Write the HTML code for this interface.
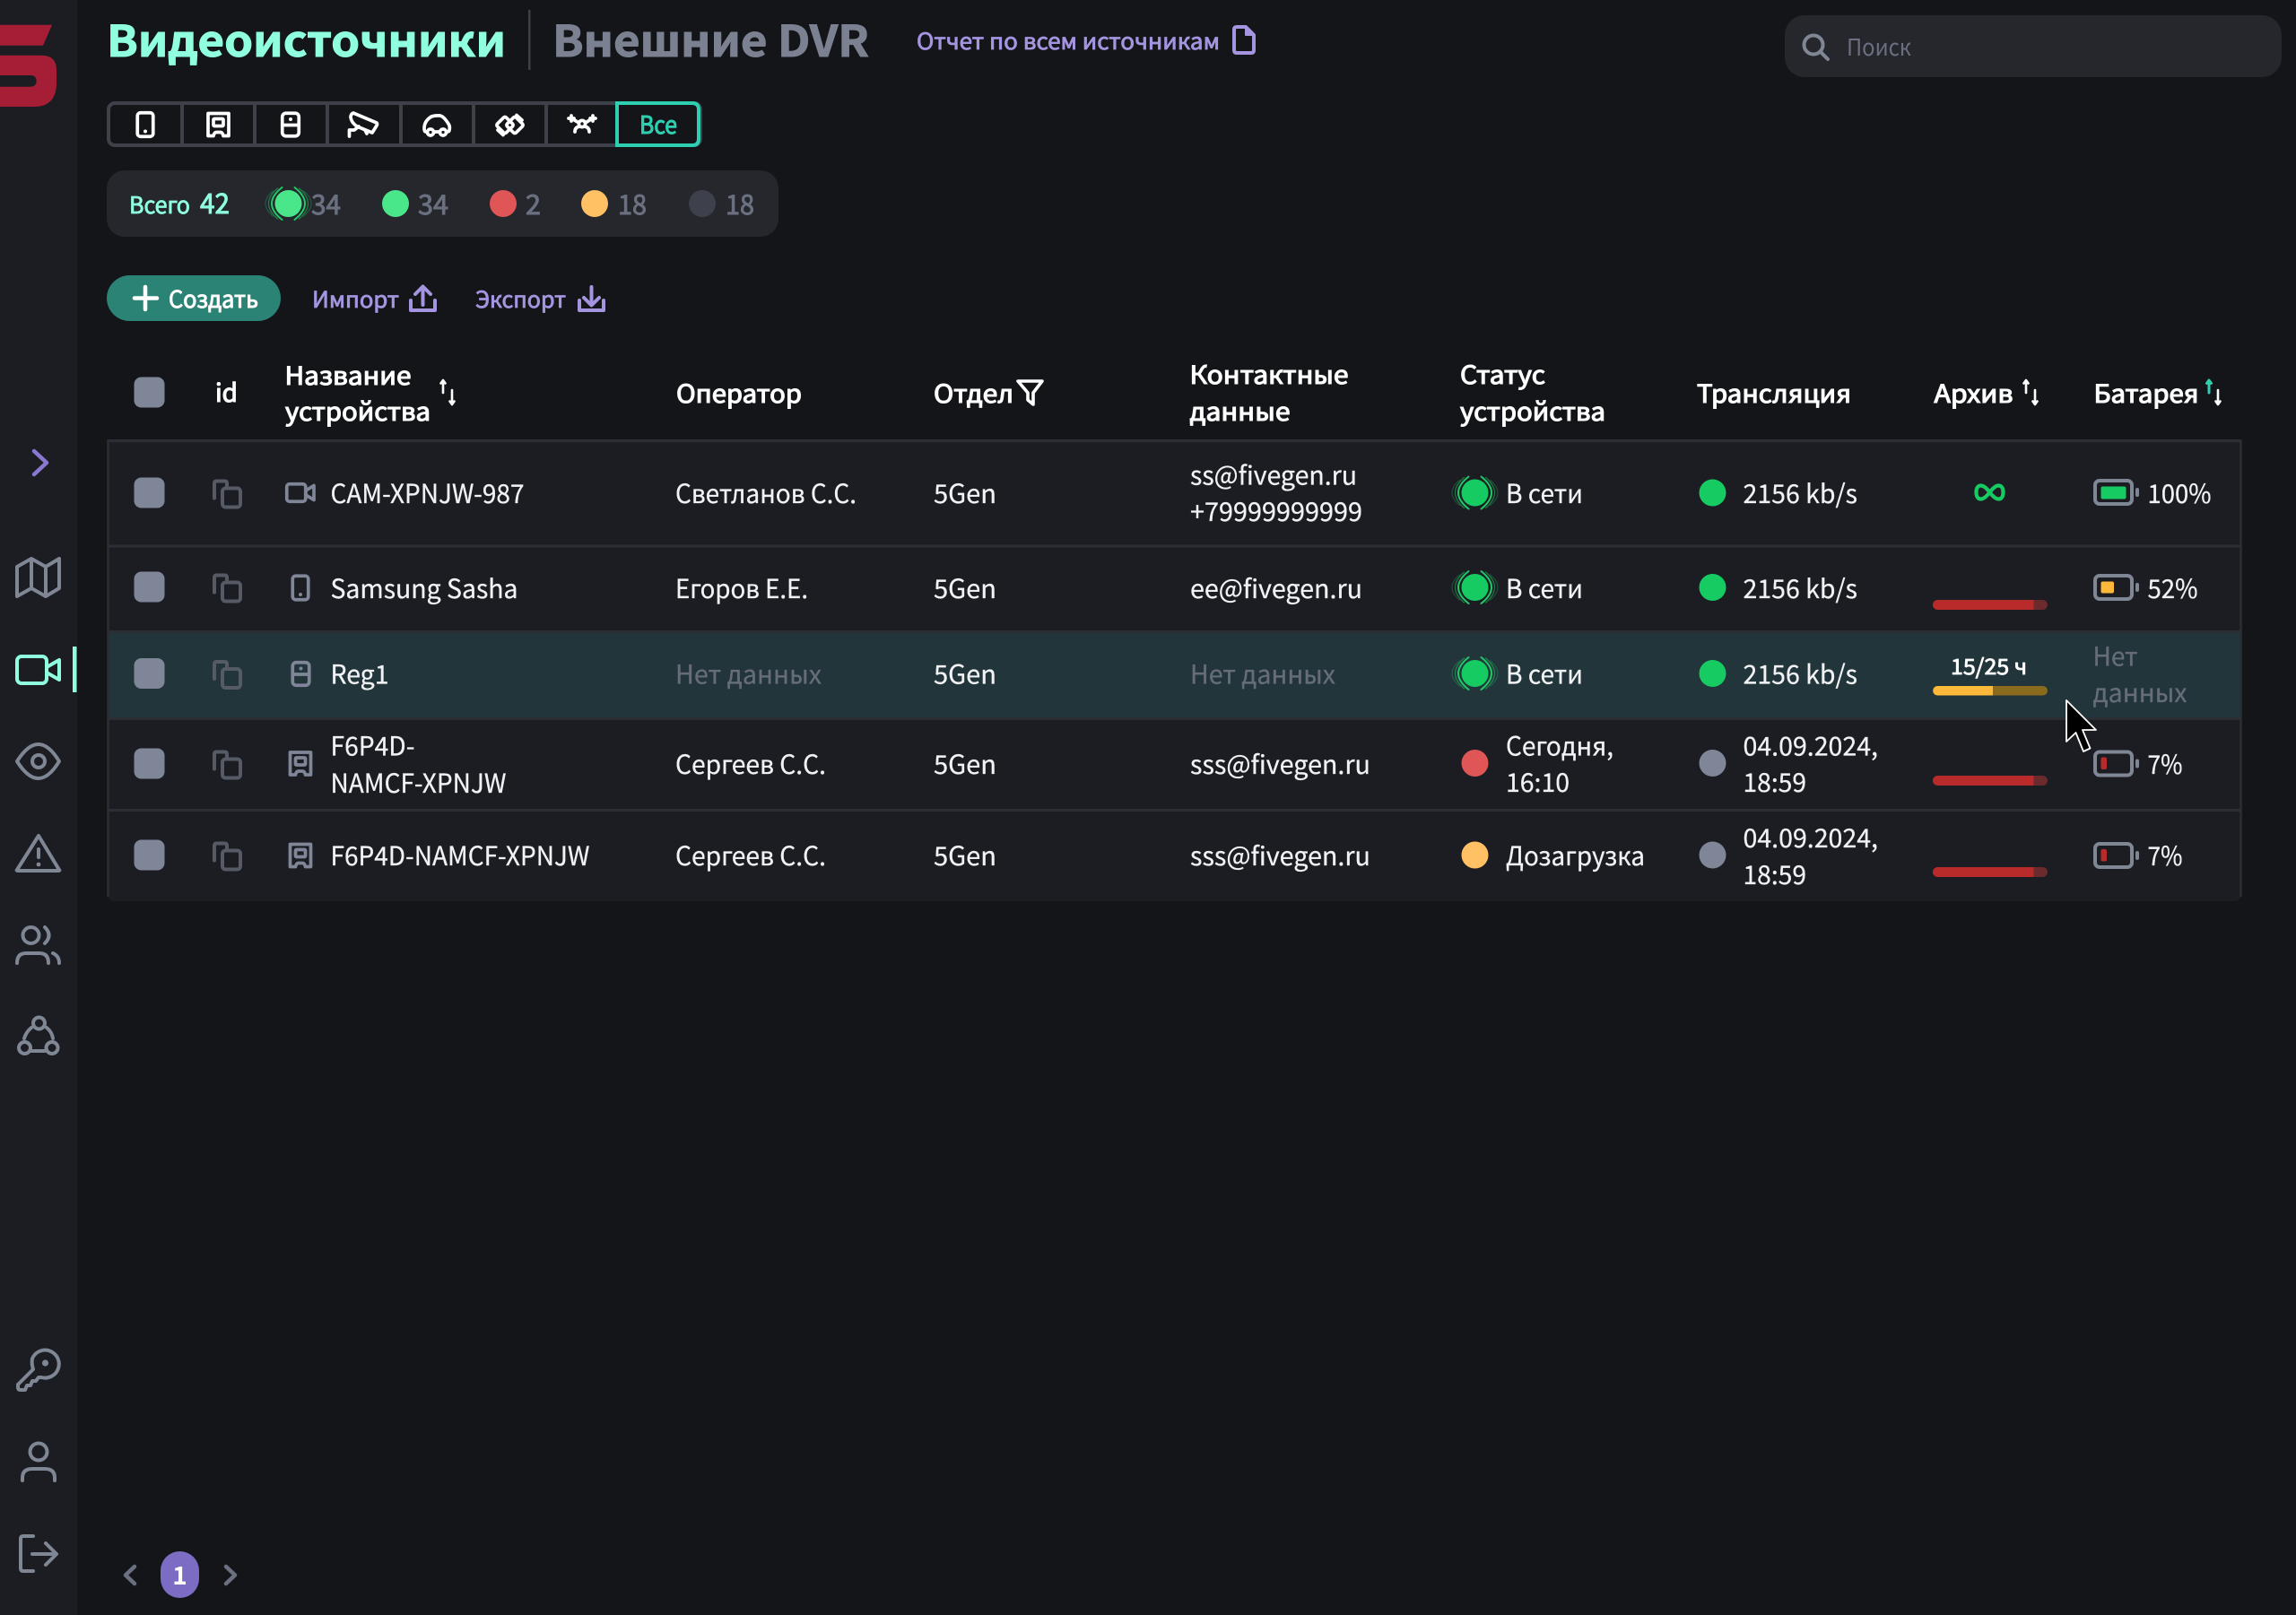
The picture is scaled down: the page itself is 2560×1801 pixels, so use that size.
<!DOCTYPE html>
<html lang="ru"><head><meta charset="utf-8"><title>Видеоисточники</title>
<style>
html,body{margin:0;padding:0;background:#131519;width:2560px;height:1801px;overflow:hidden}
svg{display:block}
text{font-family:"Noto Sans CJK JP","Liberation Sans",sans-serif}
.b{font-size:29px;fill:#f1f2f4;stroke:#f1f2f4;stroke-width:.25px}
.m{font-size:29px;fill:#666c7a;stroke:#666c7a;stroke-width:.25px}
.h{font-size:28px;fill:#fff;stroke:#fff;stroke-width:1.1px}
.p{font-size:25px;fill:#a595e0;stroke:#a595e0;stroke-width:.8px}
.c{font-size:30px;fill:#6b7080;stroke:#6b7080;stroke-width:.9px}
.i{fill:none;stroke:#7f8694;stroke-width:4;stroke-linecap:round;stroke-linejoin:round}
.s{fill:none;stroke:currentColor;stroke-width:3.7;stroke-linecap:round;stroke-linejoin:round}
</style></head><body>
<svg width="2560" height="1801" viewBox="0 0 2560 1801" xmlns="http://www.w3.org/2000/svg">
<defs>
<symbol id="phone" overflow="visible"><rect class="s" x="1.75" y="1.75" width="17.5" height="26.5" rx="3.5"/><circle cx="10.5" cy="22.5" r="2" fill="currentColor"/></symbol>
<symbol id="dvr" overflow="visible"><path class="s" d="M2 2H25V27H19Q18 23 16 23H11Q9 23 8 27H2Z"/><rect class="s" x="8" y="8" width="11" height="8" rx="1"/></symbol>
<symbol id="reg" overflow="visible"><rect class="s" x="1.75" y="1.75" width="18.5" height="25.5" rx="4"/><path class="s" d="M1.75 15H20.25"/><circle cx="11" cy="8.5" r="2" fill="currentColor"/></symbol>
<symbol id="cam" overflow="visible"><rect class="s" x="1.75" y="1.75" width="21" height="19.5" rx="3"/><path class="s" d="M23 9L32 3.5V19.5L23 14Z"/></symbol>
<symbol id="copy" overflow="visible"><path fill="none" stroke="#555a65" stroke-width="4" stroke-linecap="round" d="M2 21V4.500Q2 2 4.500 2H13.500Q16 2 16 4.500V7"/><rect fill="none" stroke="#555a65" stroke-width="4" x="11" y="10" width="20" height="21" rx="3.500"/></symbol>
<symbol id="sort" overflow="visible"><g fill="none" stroke="#fff" stroke-width="2.6" stroke-linecap="round" stroke-linejoin="round"><path d="M4 1V15M1.5 4.5L4 1L6.5 4.5"/><path d="M14 12V28M11.5 24.5L14 28L16.5 24.5"/></g></symbol>
<symbol id="live" overflow="visible"><g fill="none" stroke="#22c868" stroke-linecap="round"><path stroke-width="2" d="M-7 -18Q-30 0 -7 18M7 -18Q30 0 7 18"/><path stroke-width="1.2" opacity=".55" d="M-12 -17Q-32 0 -12 17M12 -17Q32 0 12 17"/><path stroke-width="1.2" opacity=".3" d="M-17 -14Q-34 0 -17 14M17 -14Q34 0 17 14"/></g></symbol>
<symbol id="batt" overflow="visible"><rect x="2" y="2" width="41" height="26" rx="5" fill="none" stroke="#7f8694" stroke-width="4"/><rect x="47" y="10" width="4" height="10" rx="2" fill="#7f8694"/></symbol>
</defs>

<rect width="2560" height="1801" fill="#131519"/>
<!-- sidebar -->
<rect width="86" height="1801" fill="#1b1d23"/>
<g fill="#a51e36">
<path d="M0 27.700H58L48 50.700H0Z"/>
<path fill-rule="evenodd" d="M0 61.700H46Q63 61.700 63 78V92Q63 119 38 119H0ZM0 84V96.700H34Q40.600 96.700 40.600 90.300Q40.600 84 34 84Z"/>
</g>
<path fill="none" stroke="#8a78d0" stroke-width="4.5" stroke-linecap="round" stroke-linejoin="round" d="M38 503L52 516L38 529"/>
<path class="i" d="M19 632L35 623L51 632L66 623V656L51 665L35 656L19 665ZM35 623V656M51 632V665"/>
<g class="i" style="stroke:#8fffe0"><rect x="19" y="732" width="33" height="30" rx="5"/><path d="M52 744L66 736V758L52 750Z"/></g>
<rect x="81" y="721" width="4.5" height="51" fill="#8fffe0"/>
<path class="i" d="M19 849Q43 811 66 849Q43 887 19 849Z"/><circle class="i" cx="43" cy="849" r="7"/>
<path class="i" d="M43 932L66 970Q67 971 65 971H20Q18 971 19 970Z"/><path class="i" d="M43 947V956"/><circle cx="43" cy="964" r="2.4" fill="#7f8694"/>
<circle class="i" cx="34.5" cy="1043" r="9"/><path class="i" d="M19 1074Q19 1063 29 1063H44Q54 1063 54 1074M50 1034Q59 1043 50 1052M59 1063Q66 1066 66 1074"/>
<circle class="i" cx="43.5" cy="1141" r="6.5"/><circle class="i" cx="27.5" cy="1168.5" r="6.5"/><circle class="i" cx="58" cy="1168.5" r="6.5"/><path class="i" d="M35 1146Q29 1151 27 1158M52 1146Q58 1151 59 1158M35 1172H50"/>
<path class="i" d="M36 1515A15.5 15.5 0 1 1 46 1536H43L40 1540H36L34 1545H30L28 1550H23Q20 1550 20 1547V1544L37 1527Q35 1521 36 1515Z"/><circle cx="50.5" cy="1520" r="3.6" fill="#7f8694"/>
<circle class="i" cx="43" cy="1619" r="9.5"/><path class="i" d="M25 1651V1648Q25 1638 36 1638H50Q61 1638 61 1648V1651"/>
<path class="i" d="M37 1713H26Q23 1713 23 1716V1749Q23 1752 26 1752H37M36 1733H62M51 1721L63 1733L51 1745"/>

<!-- header -->
<text x="119" y="63" font-size="48" font-weight="700" fill="#8fffe0" stroke="#8fffe0" stroke-width="1" textLength="445" lengthAdjust="spacingAndGlyphs">Видеоисточники</text>
<rect x="589" y="11" width="2.5" height="67" fill="#3e4049"/>
<text x="616" y="63" font-size="48" font-weight="700" fill="#7b8190" stroke="#7b8190" stroke-width="1" textLength="353" lengthAdjust="spacingAndGlyphs">Внешние DVR</text>
<text class="p" x="1022" y="55" textLength="338" lengthAdjust="spacingAndGlyphs">Отчет по всем источникам</text>
<path fill="none" stroke="#a595e0" stroke-width="4" stroke-linejoin="round" d="M1376 33Q1376 30 1379 30H1389L1398 39V56Q1398 59 1395 59H1379Q1376 59 1376 56Z"/><path fill="#a595e0" stroke="#a595e0" stroke-width="2" stroke-linejoin="round" d="M1389 30V39H1398Z"/>
<rect x="1990" y="17" width="554" height="69" rx="22" fill="#25272d"/>
<circle class="i" cx="2022" cy="50" r="10.5"/><path class="i" d="M2030 58L2038 66"/>
<text x="2059" y="62" font-size="26" fill="#6b7080" textLength="72" lengthAdjust="spacingAndGlyphs">Поиск</text>

<!-- device tabs -->
<rect x="121" y="115" width="660" height="47" rx="7" fill="none" stroke="#3e4149" stroke-width="4"/>
<g fill="#3e4149"><rect x="201" y="113" width="4" height="51"/><rect x="282" y="113" width="4" height="51"/><rect x="363" y="113" width="4" height="51"/><rect x="445" y="113" width="4" height="51"/><rect x="526" y="113" width="4" height="51"/><rect x="607" y="113" width="4" height="51"/></g>
<path d="M688 115H772Q779 115 779 122V155Q779 162 772 162H688Z" fill="#131519" stroke="#2ecfb0" stroke-width="4"/>
<g color="#fff">
<use href="#phone" x="151.5" y="124"/>
<use href="#dvr" x="230" y="124.5"/>
<use href="#reg" x="313" y="124.5"/>
<g class="s" transform="translate(388 123)"><path d="M6 3L32 14Q33 15 32 17L27 25L10 18Q4 14 3 8Q3 4 6 3Z"/><path d="M1.5 29V22H7L12 18M19 22L21 26"/></g>
<g class="s" transform="translate(471 127)"><path d="M5.5 20H4Q2 20 2 16Q2 8 10 3Q14 1.5 20 2Q24 3 29 11Q31 14 30 18Q30 20 27 20M12.5 20H19.5"/><circle cx="9" cy="20.5" r="3.5"/><circle cx="23" cy="20.500" r="3.5"/></g>
<g class="s" transform="translate(552 127)"><rect x="-7" y="-7" width="14" height="14" rx="2" transform="translate(11 12.500) rotate(45)"/><rect x="-7" y="-7" width="14" height="14" rx="2" transform="translate(22 12.500) rotate(45)"/><path d="M24 1.500L30 7M3 18L9 23.500"/></g>
<g class="s" transform="translate(633 128)"><circle cx="16" cy="10" r="3.6"/><path d="M6 5L12.5 9M26 5L19.500 9M8 19Q8 14 13 13M24 19Q24 14 19 13M1 4H7M4 1V7M25 4H31M28 1V7"/></g>
</g>
<text x="713" y="149" font-size="27" fill="#2ecfb0" stroke="#2ecfb0" stroke-width="1" textLength="42" lengthAdjust="spacingAndGlyphs">Все</text>

<!-- counters -->
<rect x="119" y="190" width="749" height="74" rx="20" fill="#25272d"/>
<text x="144" y="238" font-size="26" fill="#8fffe0" stroke="#8fffe0" stroke-width=".8" textLength="68" lengthAdjust="spacingAndGlyphs">Всего</text>
<text x="223" y="238" font-size="31" fill="#8fffe0" stroke="#8fffe0" stroke-width=".9" textLength="33" lengthAdjust="spacingAndGlyphs">42</text>
<use href="#live" x="321.500" y="227"/><circle cx="321.500" cy="227" r="15" fill="#4ae68a"/>
<text class="c" x="347" y="239" textLength="33" lengthAdjust="spacingAndGlyphs">34</text>
<circle cx="441" cy="227" r="15" fill="#4ae68a"/><text class="c" x="466" y="239" textLength="34" lengthAdjust="spacingAndGlyphs">34</text>
<circle cx="561" cy="227" r="15" fill="#e05555"/><text class="c" x="586" y="239" textLength="17" lengthAdjust="spacingAndGlyphs">2</text>
<circle cx="663" cy="227" r="15" fill="#ffc163"/><text class="c" x="689" y="239" textLength="32" lengthAdjust="spacingAndGlyphs">18</text>
<circle cx="783" cy="227" r="15" fill="#3e414b"/><text class="c" x="809" y="239" textLength="32" lengthAdjust="spacingAndGlyphs">18</text>

<!-- actions -->
<rect x="119" y="307" width="194" height="51" rx="25.500" fill="#2a8375"/>
<path d="M162 320V345M150 332.500H175" stroke="#fff" stroke-width="4.500" stroke-linecap="round"/>
<text x="188" y="343" font-size="26" fill="#fff" stroke="#fff" stroke-width=".9" textLength="100" lengthAdjust="spacingAndGlyphs">Создать</text>
<text class="p" x="348" y="343" font-size="26" textLength="97" lengthAdjust="spacingAndGlyphs">Импорт</text>
<path fill="none" stroke="#a595e0" stroke-width="4" stroke-linecap="round" stroke-linejoin="round" d="M458 335V346H485V335M471.500 340V320M463 328L471.500 319.500L480 328"/>
<text class="p" x="530" y="343" font-size="26" textLength="101" lengthAdjust="spacingAndGlyphs">Экспорт</text>
<path fill="none" stroke="#a595e0" stroke-width="4" stroke-linecap="round" stroke-linejoin="round" d="M646 335V346H673V335M659.500 320V340M651 332L659.500 340.500L668 332"/>

<!-- table header -->
<rect x="149.500" y="420.500" width="34" height="34" rx="8" fill="#7f8698"/>
<text class="h" x="240" y="448" textLength="25" lengthAdjust="spacingAndGlyphs">id</text>
<text class="h" x="317.500" y="429" textLength="141" lengthAdjust="spacingAndGlyphs">Название</text>
<text class="h" x="318" y="469" textLength="162" lengthAdjust="spacingAndGlyphs">устройства</text>
<use href="#sort" x="490" y="423"/>
<text class="h" x="754" y="449" textLength="140" lengthAdjust="spacingAndGlyphs">Оператор</text>
<text class="h" x="1041" y="449" textLength="89" lengthAdjust="spacingAndGlyphs">Отдел</text>
<path fill="none" stroke="#fff" stroke-width="3.600" stroke-linejoin="round" d="M1135 425H1162L1152 438V451L1146 446V438Z"/>
<text class="h" x="1326.500" y="428" textLength="177" lengthAdjust="spacingAndGlyphs">Контактные</text>
<text class="h" x="1326.500" y="469" textLength="112" lengthAdjust="spacingAndGlyphs">данные</text>
<text class="h" x="1628" y="428" textLength="95" lengthAdjust="spacingAndGlyphs">Статус</text>
<text class="h" x="1628" y="469" textLength="162" lengthAdjust="spacingAndGlyphs">устройства</text>
<text class="h" x="1892" y="449" textLength="172" lengthAdjust="spacingAndGlyphs">Трансляция</text>
<text class="h" x="2156.500" y="449" textLength="88" lengthAdjust="spacingAndGlyphs">Архив</text>
<use href="#sort" x="2255" y="423"/>
<text class="h" x="2334.500" y="449" textLength="117" lengthAdjust="spacingAndGlyphs">Батарея</text>
<use href="#sort" x="2459" y="423"/>
<path d="M2463 424V438M2460.500 427.500L2463 424L2465.500 427.500" fill="none" stroke="#2ecfb0" stroke-width="2.800" stroke-linecap="round" stroke-linejoin="round"/>

<!-- table body -->
<rect x="119.500" y="491" width="2380" height="514" rx="8" fill="#1b1d23"/>
<rect x="120" y="704.500" width="2379" height="97" fill="#22353a"/>
<path d="M120.500 1000V492H2498.500V1000" fill="none" stroke="#2b2e35" stroke-width="2.500"/>
<g fill="#2b2e35"><rect x="119.500" y="490" width="2380" height="3"/><rect x="119.500" y="607.500" width="2380" height="3"/><rect x="119.500" y="703" width="2380" height="3"/><rect x="119.500" y="800" width="2380" height="3"/><rect x="119.500" y="902" width="2380" height="3"/></g>

<!-- checkboxes & copy -->
<g fill="#7f8698"><rect x="149.500" y="532.500" width="34" height="34" rx="8"/><rect x="149.500" y="637.500" width="34" height="34" rx="8"/><rect x="149.500" y="734" width="34" height="34" rx="8"/><rect x="149.500" y="834.500" width="34" height="34" rx="8"/><rect x="149.500" y="936.500" width="34" height="34" rx="8"/></g>
<use href="#copy" x="237" y="534.500"/><use href="#copy" x="237" y="639.500"/><use href="#copy" x="237" y="736"/><use href="#copy" x="237" y="836.500"/><use href="#copy" x="237" y="938.500"/>

<!-- device icons -->
<g color="#7f8698">
<use href="#cam" x="318" y="538"/>
<use href="#phone" x="324.500" y="640.500"/>
<use href="#reg" x="324.500" y="737"/>
<use href="#dvr" x="321.500" y="837"/>
<use href="#dvr" x="321.500" y="939.500"/>
</g>

<!-- names -->
<text class="b" x="368.500" y="561" textLength="216" lengthAdjust="spacingAndGlyphs">CAM-XPNJW-987</text>
<text class="b" x="368.500" y="667" textLength="209" lengthAdjust="spacingAndGlyphs">Samsung Sasha</text>
<text class="b" x="368.500" y="762.500" textLength="65" lengthAdjust="spacingAndGlyphs">Reg1</text>
<text class="b" x="368.500" y="842.500" textLength="94" lengthAdjust="spacingAndGlyphs">F6P4D-</text>
<text class="b" x="368.500" y="884" textLength="196" lengthAdjust="spacingAndGlyphs">NAMCF-XPNJW</text>
<text class="b" x="368.500" y="965" textLength="289" lengthAdjust="spacingAndGlyphs">F6P4D-NAMCF-XPNJW</text>

<!-- operators -->
<text class="b" x="753" y="561" textLength="202" lengthAdjust="spacingAndGlyphs">Светланов С.С.</text>
<text class="b" x="753" y="667" textLength="148" lengthAdjust="spacingAndGlyphs">Егоров Е.Е.</text>
<text class="m" x="753" y="762.500" textLength="163" lengthAdjust="spacingAndGlyphs">Нет данных</text>
<text class="b" x="753" y="863" textLength="168" lengthAdjust="spacingAndGlyphs">Сергеев С.С.</text>
<text class="b" x="753" y="965" textLength="168" lengthAdjust="spacingAndGlyphs">Сергеев С.С.</text>

<!-- dept -->
<text class="b" x="1041" y="561" textLength="70" lengthAdjust="spacingAndGlyphs">5Gen</text>
<text class="b" x="1041" y="667" textLength="70" lengthAdjust="spacingAndGlyphs">5Gen</text>
<text class="b" x="1041" y="762.500" textLength="70" lengthAdjust="spacingAndGlyphs">5Gen</text>
<text class="b" x="1041" y="863" textLength="70" lengthAdjust="spacingAndGlyphs">5Gen</text>
<text class="b" x="1041" y="965" textLength="70" lengthAdjust="spacingAndGlyphs">5Gen</text>

<!-- contacts -->
<text class="b" x="1327" y="540.500" textLength="186" lengthAdjust="spacingAndGlyphs">ss@fivegen.ru</text>
<text class="b" x="1327" y="581" textLength="192" lengthAdjust="spacingAndGlyphs">+79999999999</text>
<text class="b" x="1327" y="667" textLength="192" lengthAdjust="spacingAndGlyphs">ee@fivegen.ru</text>
<text class="m" x="1327" y="762.500" textLength="162" lengthAdjust="spacingAndGlyphs">Нет данных</text>
<text class="b" x="1327" y="863" textLength="201" lengthAdjust="spacingAndGlyphs">sss@fivegen.ru</text>
<text class="b" x="1327" y="965" textLength="201" lengthAdjust="spacingAndGlyphs">sss@fivegen.ru</text>

<!-- status -->
<use href="#live" x="1644.500" y="549.500"/><circle cx="1644.500" cy="549.500" r="15" fill="#16cc62"/>
<text class="b" x="1679" y="561" textLength="86" lengthAdjust="spacingAndGlyphs">В сети</text>
<use href="#live" x="1644.500" y="655"/><circle cx="1644.500" cy="655" r="15" fill="#16cc62"/>
<text class="b" x="1679" y="667" textLength="86" lengthAdjust="spacingAndGlyphs">В сети</text>
<use href="#live" x="1644.500" y="751"/><circle cx="1644.500" cy="751" r="15" fill="#16cc62"/>
<text class="b" x="1679" y="762.500" textLength="86" lengthAdjust="spacingAndGlyphs">В сети</text>
<circle cx="1644.500" cy="851" r="15" fill="#e05555"/>
<text class="b" x="1679" y="842.500" textLength="120" lengthAdjust="spacingAndGlyphs">Сегодня,</text>
<text class="b" x="1679" y="883" textLength="71" lengthAdjust="spacingAndGlyphs">16:10</text>
<circle cx="1644.500" cy="953.500" r="15" fill="#ffc163"/>
<text class="b" x="1679" y="965" textLength="155" lengthAdjust="spacingAndGlyphs">Дозагрузка</text>

<!-- stream -->
<circle cx="1909.500" cy="549.500" r="15" fill="#16cc62"/><text class="b" x="1943.500" y="561" textLength="127.500" lengthAdjust="spacingAndGlyphs">2156 kb/s</text>
<circle cx="1909.500" cy="655" r="15" fill="#16cc62"/><text class="b" x="1943.500" y="667" textLength="127.500" lengthAdjust="spacingAndGlyphs">2156 kb/s</text>
<circle cx="1909.500" cy="751" r="15" fill="#16cc62"/><text class="b" x="1943.500" y="762.500" textLength="127.500" lengthAdjust="spacingAndGlyphs">2156 kb/s</text>
<circle cx="1909.500" cy="851" r="15" fill="#7f8698"/><text class="b" x="1943.500" y="842.500" textLength="150.500" lengthAdjust="spacingAndGlyphs">04.09.2024,</text><text class="b" x="1943.500" y="883" textLength="70.500" lengthAdjust="spacingAndGlyphs">18:59</text>
<circle cx="1909.500" cy="953.500" r="15" fill="#7f8698"/><text class="b" x="1943.500" y="945" textLength="150.500" lengthAdjust="spacingAndGlyphs">04.09.2024,</text><text class="b" x="1943.500" y="986" textLength="70.500" lengthAdjust="spacingAndGlyphs">18:59</text>

<!-- archive -->
<path fill="none" stroke="#16cc62" stroke-width="4.200" d="M2218.500 549C2214 543 2211 541.500 2208.500 541.500C2205 541.500 2203.500 545 2203.500 549C2203.500 553 2205 556.500 2208.500 556.500C2211 556.500 2214 555 2218.500 549C2223 543 2226 541.500 2228.500 541.500C2232 541.500 2233.500 545 2233.500 549C2233.500 553 2232 556.500 2228.500 556.500C2226 556.500 2223 555 2218.500 549Z"/>
<rect x="2155" y="669" width="128" height="11" rx="5.500" fill="#6b2a2e"/><path d="M2160.500 669H2267.500V680H2160.500A5.500 5.500 0 0 1 2160.500 669Z" fill="#b92a2a"/>
<text x="2175" y="752" font-size="24" fill="#fff" stroke="#fff" stroke-width=".8" textLength="85" lengthAdjust="spacingAndGlyphs">15/25 ч</text>
<rect x="2155" y="765" width="128" height="10.500" rx="5.250" fill="#8a6a1c"/><path d="M2160.500 765H2222V775.500H2160.500A5.250 5.250 0 0 1 2160.500 765Z" fill="#ffb93a"/>
<rect x="2155" y="865" width="128" height="11" rx="5.500" fill="#6b2a2e"/><path d="M2160.500 865H2267.500V876H2160.500A5.500 5.500 0 0 1 2160.500 865Z" fill="#b92a2a"/>
<rect x="2155" y="967" width="128" height="11" rx="5.500" fill="#6b2a2e"/><path d="M2160.500 967H2267.500V978H2160.500A5.500 5.500 0 0 1 2160.500 967Z" fill="#b92a2a"/>

<!-- battery -->
<use href="#batt" x="2334" y="534"/><rect x="2342.500" y="542.500" width="28" height="14" rx="2" fill="#16cc62"/><text class="b" x="2394.500" y="561" textLength="71" lengthAdjust="spacingAndGlyphs">100%</text>
<use href="#batt" x="2334" y="640"/><rect x="2342.500" y="648.500" width="14.500" height="13" rx="2" fill="#ffb93a"/><text class="b" x="2394.500" y="667" textLength="56" lengthAdjust="spacingAndGlyphs">52%</text>
<text class="m" x="2333.500" y="742.500" textLength="50" lengthAdjust="spacingAndGlyphs">Нет</text><text class="m" x="2333.500" y="783" textLength="105" lengthAdjust="spacingAndGlyphs">данных</text>
<use href="#batt" x="2334" y="836.500"/><rect x="2342.500" y="844.500" width="6.500" height="13.500" rx="2" fill="#b92a2a"/><text class="b" x="2394.500" y="863" textLength="39" lengthAdjust="spacingAndGlyphs">7%</text>
<use href="#batt" x="2334" y="939"/><rect x="2342.500" y="947" width="6.500" height="13.500" rx="2" fill="#b92a2a"/><text class="b" x="2394.500" y="965" textLength="39" lengthAdjust="spacingAndGlyphs">7%</text>

<!-- cursor -->
<path d="M2304 781V827L2314.500 817L2323 838L2330.500 834.500L2322 814H2337Z" fill="#000" stroke="#fff" stroke-width="1.800" stroke-linejoin="round"/>

<!-- pagination -->
<path fill="none" stroke="#6b7080" stroke-width="4.500" stroke-linecap="round" stroke-linejoin="round" d="M150 1747L140 1756.500L150 1766M252 1747L262 1756.500L252 1766"/>
<rect x="179" y="1730" width="43" height="52" rx="21.500" fill="#7d6cc4"/>
<text x="200.500" y="1767" font-size="28" font-weight="700" fill="#fff" text-anchor="middle">1</text>
</svg>
</body></html>
